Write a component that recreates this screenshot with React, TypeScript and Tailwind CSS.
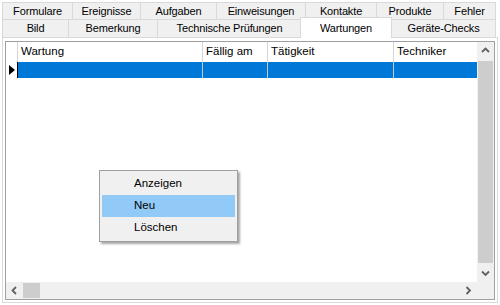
import React from 'react';

const topTabs = [
  { label: 'Formulare', w: 'w-[70px]' },
  { label: 'Ereignisse', w: 'w-[68px]' },
  { label: 'Aufgaben', w: 'w-[76px]' },
  { label: 'Einweisungen', w: 'w-[89px]' },
  { label: 'Kontakte', w: 'w-[71px]' },
  { label: 'Produkte', w: 'w-[67px]' },
  { label: 'Fehler', w: 'w-[53px]' },
];

const bottomTabs = [
  { label: 'Bild', w: 'w-[66px]' },
  { label: 'Bemerkung', w: 'w-[89px]' },
  { label: 'Technische Prüfungen', w: 'w-[144px]' },
  { label: 'Wartungen', w: 'w-[90px]', active: true },
  { label: 'Geräte-Checks', w: 'w-[105px]' },
];

const columns = [
  { label: 'Wartung', w: 'w-[185px]' },
  { label: 'Fällig am', w: 'w-[65px]' },
  { label: 'Tätigkeit', w: 'w-[126px]' },
  { label: 'Techniker', w: 'flex-1' },
];

const Chevron = ({ dir }: { dir: 'up' | 'down' | 'left' | 'right' }) => {
  const pts: Record<string, string> = {
    up: '1,5 4.5,1.5 8,5',
    down: '1,1.5 4.5,5 8,1.5',
    left: '5,1 1.5,4.5 5,8',
    right: '1.5,1 5,4.5 1.5,8',
  };
  const vertical = dir === 'up' || dir === 'down';
  return (
    <svg width={vertical ? 9 : 7} height={vertical ? 7 : 9} viewBox={vertical ? '0 0 9 7' : '0 0 7 9'}>
      <polyline points={pts[dir]} fill="none" stroke="#606060" strokeWidth="1.8" />
    </svg>
  );
};

const Tab = ({ label, w, last }: { label: string; w: string; last?: boolean }) => (
  <div
    className={`${w} flex items-center justify-center border-t border-l border-[#d9d9d9] bg-[#f0f0f0] tracking-[-0.15px] ${last ? 'border-r' : ''}`}
  >
    {label}
  </div>
);

export default function App() {
  return (
    <div
      className="relative w-[500px] h-[305px] bg-white pt-[2px] pl-[2px] text-[11px] text-black overflow-hidden"
      style={{ fontFamily: '"Liberation Sans", Arial, sans-serif' }}
    >
      {/* tab rows */}
      <div className="flex w-[494px] h-[17px]">
        {topTabs.map((t, i) => (
          <Tab key={t.label} label={t.label} w={t.w} last={i === topTabs.length - 1} />
        ))}
      </div>
      <div className="flex w-[494px] h-[18px]">
        {bottomTabs.map((t, i) =>
          t.active ? (
            <div
              key={t.label}
              className="relative z-10 self-start -mt-[2px] -mx-[1px] w-[92px] h-[21px] flex justify-center pt-[2px] bg-white border-t border-l border-r border-[#d9d9d9] tracking-[-0.15px]"
            >
              {t.label}
            </div>
          ) : (
            <Tab key={t.label} label={t.label} w={t.w} last={i === bottomTabs.length - 1} />
          )
        )}
      </div>

      {/* panel */}
      <div className="w-[496px] h-[266px] border border-[#d9d9d9] bg-white pt-[3px] px-[2px] pb-[2px]">
        <div className="h-full border border-[#a0a0a0] flex flex-col">
          <div className="flex flex-1 min-h-0">
            {/* grid content */}
            <div className="flex-1 bg-white text-[11.5px]">
              <div className="flex h-[20px]">
                <div className="w-[12px] border-r border-[#d5d5d5]" />
                {columns.map((c, i) => (
                  <div
                    key={c.label}
                    className={`${c.w} flex items-center pl-[3px] ${i < columns.length - 1 ? 'border-r border-[#d5d5d5]' : ''}`}
                  >
                    {c.label}
                  </div>
                ))}
              </div>
              <div className="flex h-[16px]">
                <div className="w-[12px] flex items-center pl-[3px] border-r border-black">
                  <svg width="6" height="10" viewBox="0 0 6 10">
                    <polygon points="0,0 6,5 0,10" fill="#000" />
                  </svg>
                </div>
                {columns.map((c, i) => (
                  <div
                    key={c.label}
                    className={`${c.w} bg-[#0078d7] ${i < columns.length - 1 ? 'border-r border-[#c8c8c8]' : ''}`}
                  />
                ))}
              </div>
            </div>
            {/* vertical scrollbar */}
            <div className="w-[17px] bg-[#f0f0f0] flex flex-col">
              <div className="h-[17px] flex items-center justify-center">
                <Chevron dir="up" />
              </div>
              <div className="flex-1 mx-[1px] my-[2px] bg-[#cdcdcd]" />
              <div className="h-[17px] flex items-center justify-center">
                <Chevron dir="down" />
              </div>
            </div>
          </div>
          {/* horizontal scrollbar */}
          <div className="h-[17px] flex bg-[#f0f0f0]">
            <div className="w-[17px] flex items-center justify-center">
              <Chevron dir="left" />
            </div>
            <div className="w-[17px] my-[1px] bg-[#cdcdcd]" />
            <div className="flex-1" />
            <div className="w-[17px] flex items-center justify-center">
              <Chevron dir="right" />
            </div>
            <div className="w-[17px]" />
          </div>
        </div>
      </div>

      {/* context menu */}
      <div className="absolute left-[99px] top-[170px] w-[139px] border border-[#a0a0a0] bg-[#f0f0f0] p-[2px] text-[11.5px] shadow-[2px_2px_2px_rgba(0,0,0,0.35)]">
        {['Anzeigen', 'Neu', 'Löschen'].map((item) => (
          <div
            key={item}
            className={`h-[22px] flex items-center pl-[32px] ${item === 'Neu' ? 'bg-[#91c9f7]' : ''}`}
          >
            {item}
          </div>
        ))}
      </div>
    </div>
  );
}
